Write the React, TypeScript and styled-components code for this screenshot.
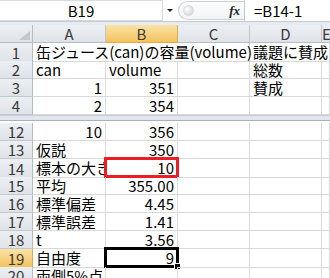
import styled, { createGlobalStyle, css } from "styled-components";

const GlobalStyle = createGlobalStyle`
  html, body {
    margin: 0;
    padding: 0;
    background: #ffffff;
  }
  body {
    font-family: "Noto Sans CJK JP", "Liberation Sans", sans-serif;
    overflow: hidden;
  }
`;

const COLS = "33px 73px 72px 72px 72px 1fr";

const Sheet = styled.div`
  width: 330px;
  height: 278px;
  overflow: hidden;
  background: #ffffff;
  color: #000000;
  font-size: 15px;
`;

const FormulaBar = styled.div`
  height: 21px;
  display: flex;
  align-items: stretch;
  border-bottom: 1px solid #c3c9d2;
  background: #ffffff;
`;

const NameBox = styled.div`
  width: 163px;
  display: flex;
  align-items: center;
  justify-content: center;
  border: 1px solid #d7dbe1;
  border-left: none;
  box-sizing: border-box;
  font-size: 15px;
  line-height: 1;
`;

const DropButton = styled.div`
  width: 14px;
  display: flex;
  align-items: center;
  justify-content: center;
  &::after {
    content: "";
    border-left: 3px solid transparent;
    border-right: 3px solid transparent;
    border-top: 3px solid #222;
  }
`;

const Knob = styled.div`
  flex: 1;
  margin: 1px 0 1px 1px;
  display: flex;
  align-items: center;
  border: 1px solid #cdd1d7;
  border-right: none;
  border-radius: 10px 0 0 10px;
  background: linear-gradient(#ffffff, #f1f3f6);
  padding-left: 4px;
  &::before {
    content: "";
    width: 9px;
    height: 9px;
    border-radius: 50%;
    background: radial-gradient(circle at 35% 35%, #ffffff, #c9cdd3);
    border: 1px solid #d5d8dd;
  }
`;

const FxLabel = styled.span`
  margin-left: auto;
  margin-right: 4px;
  align-self: center;
  font-family: "Liberation Serif", serif;
  font-style: italic;
  font-weight: bold;
  font-size: 13px;
  color: #222;
`;

const FormulaInput = styled.div`
  width: 76px;
  border-left: 1px solid #c3c9d2;
  display: flex;
  align-items: center;
  padding-left: 9px;
  font-size: 15px;
  line-height: 1;
`;

const BarGap = styled.div`
  height: 3px;
  background: #e8ebf0;
`;

const Row = styled.div`
  display: grid;
  grid-template-columns: ${COLS};
  height: 18px;
`;

const headerFace = css<{ $selected?: boolean }>`
  box-sizing: border-box;
  display: flex;
  align-items: center;
  justify-content: center;
  color: #3a3a3a;
  font-size: 15px;
  line-height: 1;
  background: ${(p) =>
    p.$selected
      ? "linear-gradient(#fbe2a6, #f3c35e)"
      : "linear-gradient(#eceff3, #dfe3e8)"};
  border-right: 1px solid ${(p) => (p.$selected ? "#e2a84c" : "#c2c8d0")};
  border-bottom: 1px solid ${(p) => (p.$selected ? "#e2a84c" : "#b5bcc6")};
`;

const Corner = styled.div`
  position: relative;
  box-sizing: border-box;
  background: linear-gradient(#eceff3, #dfe3e8);
  border-right: 1px solid #b5bcc6;
  border-bottom: 1px solid #b5bcc6;
  &::after {
    content: "";
    position: absolute;
    right: 2px;
    bottom: 2px;
    border-left: 11px solid transparent;
    border-bottom: 9px solid #c3c8cf;
  }
`;

const ColHeader = styled.div<{ $selected?: boolean }>`
  ${headerFace}
`;

const RowHeader = styled.div<{ $selected?: boolean }>`
  ${headerFace}
  border-right-color: ${(p) => (p.$selected ? "#e2a84c" : "#b5bcc6")};
  border-bottom-color: ${(p) => (p.$selected ? "#e2a84c" : "#c2c8d0")};
`;

const Cell = styled.div<{ $right?: boolean; $span?: number; $clip?: boolean }>`
  position: relative;
  box-sizing: border-box;
  grid-column: span ${(p) => p.$span ?? 1};
  border-right: 1px solid #d9d9d9;
  border-bottom: 1px solid #d9d9d9;
  padding: 0 3px;
  line-height: 18px;
  white-space: nowrap;
  overflow: ${(p) => (p.$clip ? "hidden" : "visible")};
  text-align: ${(p) => (p.$right ? "right" : "left")};
`;

const SplitBar = styled.div`
  height: 4px;
  margin-bottom: 2px;
  background: #e2e5ee;
  border-top: 1px solid #c8ccd6;
  border-bottom: 1px solid #a9b0be;
`;

const Mark = styled.div<{ $tone: "red" | "active" }>`
  position: absolute;
  left: -2px;
  top: -2px;
  right: -2px;
  bottom: -1px;
  border: 3px solid ${(p) => (p.$tone === "red" ? "#ee1c24" : "#000000")};
  pointer-events: none;
`;

const FillHandle = styled.div`
  position: absolute;
  right: -5px;
  bottom: -5px;
  width: 5px;
  height: 5px;
  background: #000;
  border: 1px solid #fff;
`;

type CellData = { v?: string; r?: boolean; span?: number; mark?: "red" | "active" };
type RowData = { n: number; cells: CellData[] };

const topRows: RowData[] = [
  { n: 1, cells: [{ v: "缶ジュース(can)の容量(volume)", span: 3 }, { v: "議題に賛成し", span: 2 }] },
  { n: 2, cells: [{ v: "can" }, { v: "volume" }, {}, { v: "総数" }, {}] },
  { n: 3, cells: [{ v: "1", r: true }, { v: "351", r: true }, {}, { v: "賛成" }, {}] },
  { n: 4, cells: [{ v: "2", r: true }, { v: "354", r: true }, {}, {}, {}] },
];

const lowRows: RowData[] = [
  { n: 12, cells: [{ v: "10", r: true }, { v: "356", r: true }, {}, {}, {}] },
  { n: 13, cells: [{ v: "仮説" }, { v: "350", r: true }, {}, {}, {}] },
  { n: 14, cells: [{ v: "標本の大きさ" }, { v: "10", r: true, mark: "red" }, {}, {}, {}] },
  { n: 15, cells: [{ v: "平均" }, { v: "355.00", r: true }, {}, {}, {}] },
  { n: 16, cells: [{ v: "標準偏差" }, { v: "4.45", r: true }, {}, {}, {}] },
  { n: 17, cells: [{ v: "標準誤差" }, { v: "1.41", r: true }, {}, {}, {}] },
  { n: 18, cells: [{ v: "t" }, { v: "3.56", r: true }, {}, {}, {}] },
  { n: 19, cells: [{ v: "自由度" }, { v: "9", r: true, mark: "active" }, {}, {}, {}] },
  { n: 20, cells: [{ v: "両側5%点" }, {}, {}, {}, {}] },
];

const ACTIVE_ROW = 19;

function SheetRow({ row }: { row: RowData }) {
  return (
    <Row>
      <RowHeader $selected={row.n === ACTIVE_ROW}>{row.n}</RowHeader>
      {row.cells.map((c, i) => (
        <Cell key={i} $right={c.r} $span={c.span} $clip={!c.span && !c.mark}>
          {c.v}
          {c.mark && (
            <Mark $tone={c.mark}>{c.mark === "active" && <FillHandle />}</Mark>
          )}
        </Cell>
      ))}
    </Row>
  );
}

export default function App() {
  return (
    <Sheet>
      <GlobalStyle />
      <FormulaBar>
        <NameBox>B19</NameBox>
        <DropButton />
        <Knob>
          <FxLabel>fx</FxLabel>
        </Knob>
        <FormulaInput>=B14-1</FormulaInput>
      </FormulaBar>
      <BarGap />
      <Row>
        <Corner />
        {["A", "B", "C", "D", "E"].map((l) => (
          <ColHeader key={l} $selected={l === "B"}>
            {l}
          </ColHeader>
        ))}
      </Row>
      {topRows.map((r) => (
        <SheetRow key={r.n} row={r} />
      ))}
      <SplitBar />
      {lowRows.map((r) => (
        <SheetRow key={r.n} row={r} />
      ))}
    </Sheet>
  );
}
